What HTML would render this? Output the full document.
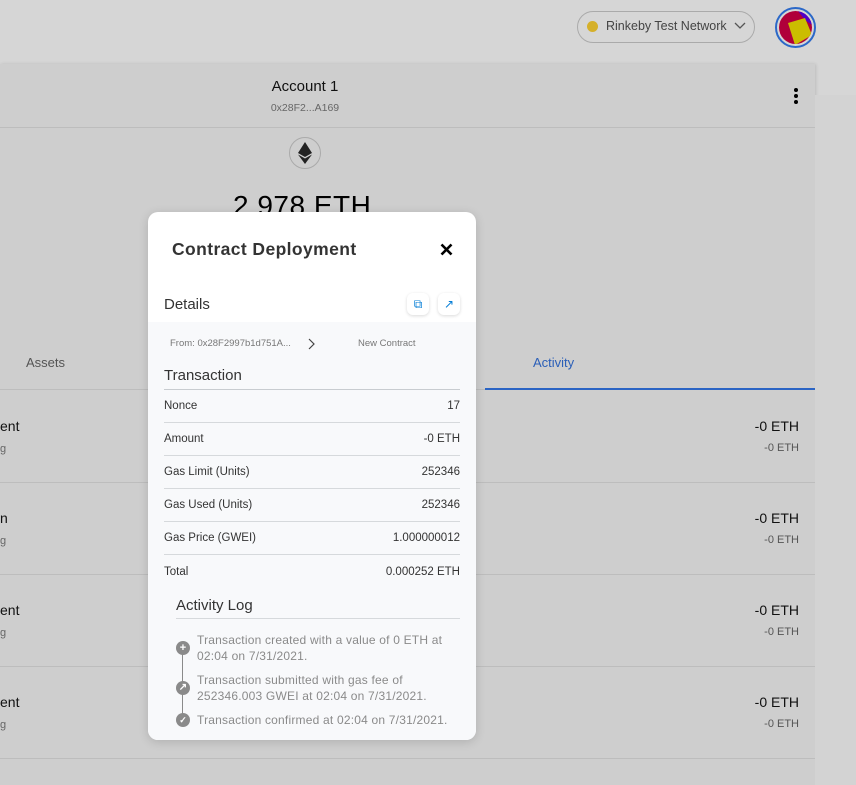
<!DOCTYPE html>
<html><head><style>
*{margin:0;padding:0;box-sizing:border-box}
body{width:856px;height:785px;overflow:hidden;background:#d6d6d6;font-family:"Liberation Sans",sans-serif;position:relative;color:#111}
.a{position:absolute}
.panel{left:0;top:64px;width:815px;height:721px;background:#cecece;box-shadow:1px 0 3px rgba(0,0,0,.12)}
.right{left:815px;top:95px;width:41px;height:690px;background:#d3d3d3}
.hr{position:absolute;left:0;width:815px;height:1px;background:#bdbdbd}
.modal{left:148px;top:212px;width:328px;height:528px;background:#fff;border-radius:10px;overflow:hidden;box-shadow:0 2px 10px rgba(0,0,0,.15)}
.gray{position:absolute;left:0;top:110px;width:328px;height:418px;background:#f8f9fb}
.row{position:absolute;left:16px;width:296px;height:33px;border-bottom:1px solid #d6d9dc;font-size:11.5px;color:#333;display:flex;justify-content:space-between;align-items:center}
.log{position:absolute;left:49px;font-size:12px;letter-spacing:.2px;color:#8a8a8a;line-height:16px}
.dot{position:absolute;left:28px;width:14px;height:14px;border-radius:50%;background:#8a8a8a;color:#fff;font-size:11px;text-align:center;line-height:14px;font-weight:bold}
.btn{position:absolute;width:22px;height:22px;border-radius:6px;background:#fff;box-shadow:0 1px 3px rgba(0,0,0,.15);color:#037dd6;font-size:12px;text-align:center;line-height:22px}
</style></head><body>
<div class="a" style="left:577px;top:11px;width:178px;height:32px;border:1px solid #aaa;border-radius:16px;background:#d6d6d6"></div>
<div class="a" style="left:587px;top:21px;width:11px;height:11px;border-radius:50%;background:#d5b02a"></div>
<div class="a" style="left:606px;top:19px;font-size:12.5px;color:#444">Rinkeby Test Network</div>
<svg class="a" style="left:734px;top:21px" width="12" height="10"><path d="M1 2l5 5 5-5" fill="none" stroke="#555" stroke-width="1.3"/></svg>
<div class="a" style="left:775px;top:7px;width:41px;height:41px;border-radius:50%;border:2px solid #2b68c8;background:#d6d6d6"></div>
<svg class="a" style="left:779px;top:11px" width="33" height="33"><clipPath id="c"><circle cx="16.5" cy="16.5" r="16.5"/></clipPath><g clip-path="url(#c)"><rect width="33" height="33" fill="#b0003a"/><polygon points="19,0 33,0 33,14 26,9" fill="#5000c8"/><polygon points="9,12 26,7 33,24 16,34" fill="#cbbd00"/></g></svg>
<div class="a panel"></div>
<div class="a right"></div>
<div class="a" style="left:0;top:78px;width:610px;text-align:center;font-size:15px;color:#111">Account 1</div>
<div class="a" style="left:0;top:102px;width:610px;text-align:center;font-size:10.5px;color:#666">0x28F2...A169</div>
<div class="a" style="left:794px;top:88px;width:4px;height:4px;border-radius:50%;background:#000;box-shadow:0 6px 0 #000,0 12px 0 #000"></div>
<div class="hr" style="top:127px"></div>
<div class="a" style="left:289px;top:137px;width:32px;height:32px;border-radius:50%;border:1px solid #aaa"></div>
<svg class="a" style="left:298px;top:142px" width="14" height="22"><path d="M7 0L0 11l7 4 7-4z" fill="#222"/><path d="M7 16.5L0 12.5 7 22l7-9.5z" fill="#222"/></svg>
<div class="a" style="left:233px;top:190px;font-size:28px;color:#000;letter-spacing:.5px">2.978 ETH</div>
<div class="a" style="left:26px;top:355px;font-size:13px;color:#555">Assets</div>
<div class="a" style="left:533px;top:355px;font-size:13px;color:#2b5fb8">Activity</div>
<div class="hr" style="top:389px"></div>
<div class="a" style="left:485px;top:388px;width:330px;height:2px;background:#2b64c4"></div>
<div class="a" style="left:0;top:418px;font-size:14px">ent</div><div class="a" style="left:0;top:443px;font-size:11px;color:#666">g</div>
<div class="a" style="left:0;top:510px;font-size:14px">n</div><div class="a" style="left:0;top:535px;font-size:11px;color:#666">g</div>
<div class="a" style="left:0;top:602px;font-size:14px">ent</div><div class="a" style="left:0;top:627px;font-size:11px;color:#666">g</div>
<div class="a" style="left:0;top:694px;font-size:14px">ent</div><div class="a" style="left:0;top:719px;font-size:11px;color:#666">g</div>
<div class="a" style="left:720px;top:418px;width:79px;text-align:right;font-size:14px">-0 ETH</div><div class="a" style="left:720px;top:442px;width:79px;text-align:right;font-size:11px;color:#555">-0 ETH</div>
<div class="a" style="left:720px;top:510px;width:79px;text-align:right;font-size:14px">-0 ETH</div><div class="a" style="left:720px;top:534px;width:79px;text-align:right;font-size:11px;color:#555">-0 ETH</div>
<div class="a" style="left:720px;top:602px;width:79px;text-align:right;font-size:14px">-0 ETH</div><div class="a" style="left:720px;top:626px;width:79px;text-align:right;font-size:11px;color:#555">-0 ETH</div>
<div class="a" style="left:720px;top:694px;width:79px;text-align:right;font-size:14px">-0 ETH</div><div class="a" style="left:720px;top:718px;width:79px;text-align:right;font-size:11px;color:#555">-0 ETH</div>
<div class="hr" style="top:482px"></div><div class="hr" style="top:574px"></div><div class="hr" style="top:666px"></div><div class="hr" style="top:758px"></div>

<div class="a modal">
<div class="gray"></div>
<div class="a" style="left:24px;top:27px;font-size:17.5px;letter-spacing:.4px;font-weight:bold;color:#333">Contract Deployment</div>
<svg class="a" style="left:292px;top:31px" width="13" height="13"><path d="M1.5 1.5l10 10M11.5 1.5l-10 10" stroke="#000" stroke-width="2.6"/></svg>
<div class="a" style="left:16px;top:84px;font-size:15px;color:#333">Details</div>
<div class="btn" style="left:259px;top:81px">⧉</div>
<div class="btn" style="left:290px;top:81px">↗</div>
<div class="a" style="left:22px;top:126px;font-size:9.5px;color:#777">From: 0x28F2997b1d751A...</div>
<svg class="a" style="left:160px;top:126px" width="8" height="12"><path d="M1 1l5 5-5 5" fill="none" stroke="#444" stroke-width="1.2"/></svg>
<div class="a" style="left:210px;top:126px;font-size:9.5px;color:#777">New Contract</div>
<div class="a" style="left:16px;top:155px;font-size:15px;color:#333">Transaction</div>
<div class="a" style="left:16px;top:177px;width:296px;height:1px;background:#c8ccd0"></div>
<div class="row" style="top:178px"><span>Nonce</span><span>17</span></div>
<div class="row" style="top:211px"><span>Amount</span><span>-0 ETH</span></div>
<div class="row" style="top:244px"><span>Gas Limit (Units)</span><span>252346</span></div>
<div class="row" style="top:277px"><span>Gas Used (Units)</span><span>252346</span></div>
<div class="row" style="top:310px"><span>Gas Price (GWEI)</span><span>1.000000012</span></div>
<div class="row" style="top:343px;border:none"><span>Total</span><span>0.000252 ETH</span></div>
<div class="a" style="left:28px;top:385px;font-size:15px;color:#333">Activity Log</div>
<div class="a" style="left:28px;top:406px;width:284px;height:1px;background:#d6d9dc"></div>
<div class="a" style="left:34px;top:436px;width:1px;height:72px;background:#8a8a8a"></div>
<div class="dot" style="top:429px">+</div>
<div class="dot" style="top:469px;font-size:10px">↗</div>
<div class="dot" style="top:501px;font-size:9px">✓</div>
<div class="log" style="top:420px">Transaction created with a value of 0 ETH at<br>02:04 on 7/31/2021.</div>
<div class="log" style="top:460px">Transaction submitted with gas fee of<br>252346.003 GWEI at 02:04 on 7/31/2021.</div>
<div class="log" style="top:500px">Transaction confirmed at 02:04 on 7/31/2021.</div>
</div>
</body></html>
